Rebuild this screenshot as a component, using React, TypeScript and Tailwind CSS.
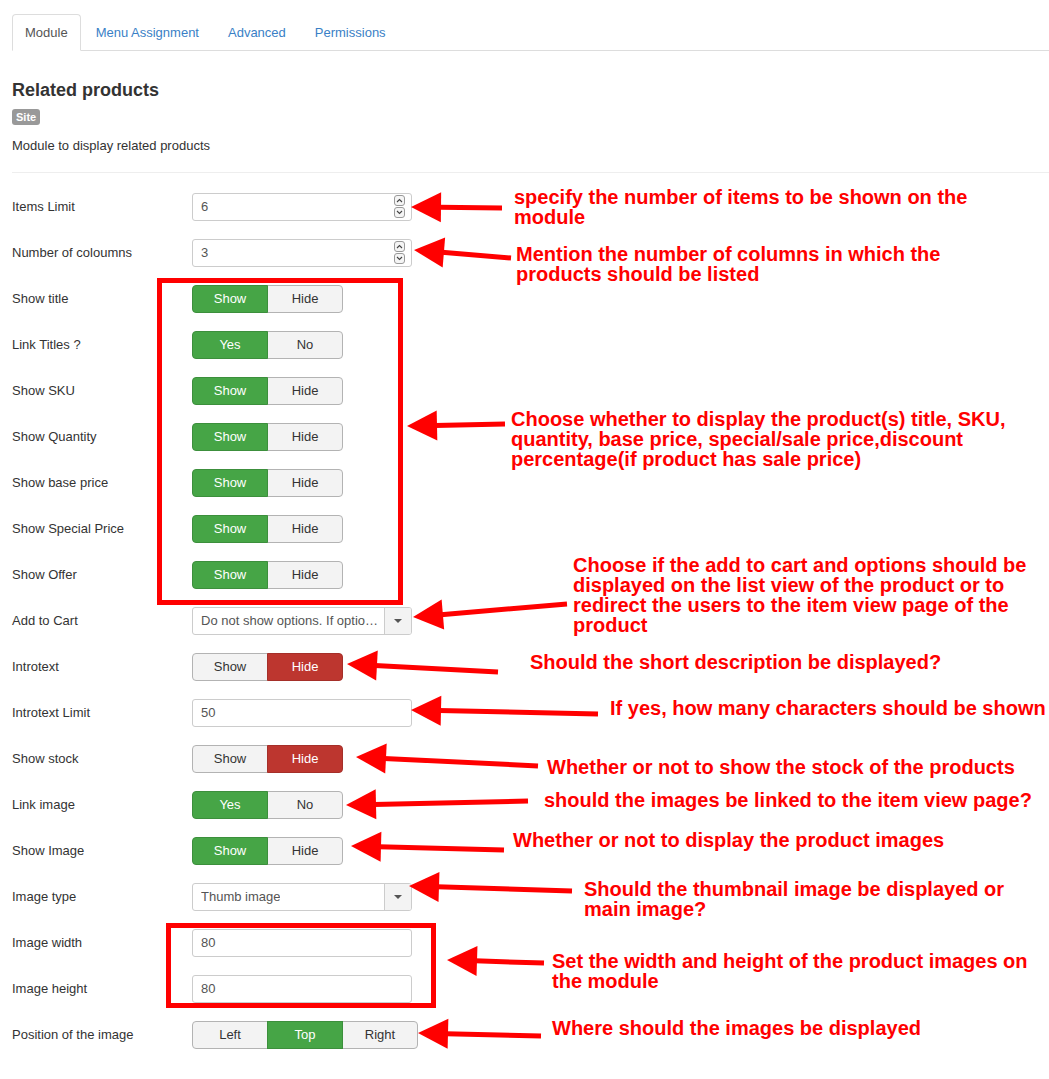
import React from "react";

type Row =
  | { label: string; kind: "number" | "text"; value: string }
  | { label: string; kind: "select"; value: string }
  | { label: string; kind: "toggle"; options: string[]; active: number; color: "green" | "red" };

const rows: Row[] = [
  { label: "Items Limit", kind: "number", value: "6" },
  { label: "Number of coloumns", kind: "number", value: "3" },
  { label: "Show title", kind: "toggle", options: ["Show", "Hide"], active: 0, color: "green" },
  { label: "Link Titles ?", kind: "toggle", options: ["Yes", "No"], active: 0, color: "green" },
  { label: "Show SKU", kind: "toggle", options: ["Show", "Hide"], active: 0, color: "green" },
  { label: "Show Quantity", kind: "toggle", options: ["Show", "Hide"], active: 0, color: "green" },
  { label: "Show base price", kind: "toggle", options: ["Show", "Hide"], active: 0, color: "green" },
  { label: "Show Special Price", kind: "toggle", options: ["Show", "Hide"], active: 0, color: "green" },
  { label: "Show Offer", kind: "toggle", options: ["Show", "Hide"], active: 0, color: "green" },
  { label: "Add to Cart", kind: "select", value: "Do not show options. If options are required, redirect to item view" },
  { label: "Introtext", kind: "toggle", options: ["Show", "Hide"], active: 1, color: "red" },
  { label: "Introtext Limit", kind: "text", value: "50" },
  { label: "Show stock", kind: "toggle", options: ["Show", "Hide"], active: 1, color: "red" },
  { label: "Link image", kind: "toggle", options: ["Yes", "No"], active: 0, color: "green" },
  { label: "Show Image", kind: "toggle", options: ["Show", "Hide"], active: 0, color: "green" },
  { label: "Image type", kind: "select", value: "Thumb image" },
  { label: "Image width", kind: "text", value: "80" },
  { label: "Image height", kind: "text", value: "80" },
  { label: "Position of the image", kind: "toggle", options: ["Left", "Top", "Right"], active: 1, color: "green" },
];

// annotation arrows: tip -> tail
const arrows: [number, number, number, number][] = [
  [411, 207, 502, 208],
  [414, 250, 511, 258],
  [407, 426, 505, 424],
  [413, 617, 567, 604],
  [347, 664, 498, 672],
  [411, 710, 598, 714],
  [356, 757, 538, 766],
  [346, 805, 528, 801],
  [351, 846, 504, 850],
  [409, 886, 572, 891],
  [447, 960, 544, 963],
  [418, 1033, 541, 1036],
];

const notes: { x: number; y: number; lines: string[] }[] = [
  { x: 514, y: 187, lines: ["specify the number of items to be shown on the", "module"] },
  { x: 516, y: 244, lines: ["Mention the number of columns in which the", "products should be listed"] },
  {
    x: 511,
    y: 409,
    lines: [
      "Choose whether to display the product(s) title, SKU,",
      "quantity, base price, special/sale price,discount",
      "percentage(if product has sale price)",
    ],
  },
  {
    x: 573,
    y: 555,
    lines: [
      "Choose if the add to cart and options should be",
      "displayed on the list view of the product or to",
      "redirect the users to the item view page of the",
      "product",
    ],
  },
  { x: 530, y: 652, lines: ["Should the short description be displayed?"] },
  { x: 610, y: 698, lines: ["If yes, how many characters should be shown"] },
  { x: 547, y: 757, lines: ["Whether or not to show the stock of the products"] },
  { x: 544, y: 790, lines: ["should the images be linked to the item view page?"] },
  { x: 513, y: 830, lines: ["Whether or not to display the product images"] },
  { x: 584, y: 879, lines: ["Should the thumbnail image be displayed or", "main image?"] },
  { x: 552, y: 951, lines: ["Set the width and height of the product images on", "the module"] },
  { x: 552, y: 1018, lines: ["Where should the images be displayed"] },
];

function Spinner() {
  return (
    <div className="flex flex-col gap-[1px]">
      {[0, 1].map((i) => (
        <div
          key={i}
          className="flex h-[11px] w-[11px] items-center justify-center rounded-[3px] border border-[#9a9a9a] bg-[#f5f5f5]"
        >
          <svg width="7" height="5" viewBox="0 0 7 5">
            <path
              d={i === 0 ? "M1 4 L3.5 1.5 L6 4" : "M1 1 L3.5 3.5 L6 1"}
              fill="none"
              stroke="#444"
              strokeWidth="1.1"
            />
          </svg>
        </div>
      ))}
    </div>
  );
}

function Control({ row }: { row: Row }) {
  if (row.kind === "number" || row.kind === "text") {
    return (
      <div className="flex h-7 w-[220px] items-center justify-between rounded-[3px] border border-[#ccc] bg-white pl-2 pr-[6px] text-[13px] text-[#555]">
        <span>{row.value}</span>
        {row.kind === "number" && <Spinner />}
      </div>
    );
  }
  if (row.kind === "select") {
    return (
      <div className="flex h-7 w-[220px] items-stretch overflow-hidden rounded-[3px] border border-[#ccc] bg-white text-[13px] text-[#555]">
        <div className="flex min-w-0 flex-1 items-center pl-2 pr-1">
          <span className="truncate">{row.value}</span>
        </div>
        <div className="flex w-[27px] items-center justify-center border-l border-[#ccc] bg-[#f3f3f3]">
          <svg width="8" height="4" viewBox="0 0 8 4">
            <path d="M0 0 L8 0 L4 4 Z" fill="#555" />
          </svg>
        </div>
      </div>
    );
  }
  return (
    <div className="flex">
      {row.options.map((opt, i) => {
        const on = i === row.active;
        const first = i === 0;
        const last = i === row.options.length - 1;
        let cls = "border-[#b3b3b3] bg-[#f3f3f3] text-[#333]";
        if (on && row.color === "green") cls = "relative border-[#3c8f3c] bg-[#46a546] text-white";
        if (on && row.color === "red") cls = "relative border-[#a52f29] bg-[#bd362f] text-white";
        return (
          <div
            key={opt}
            className={`flex h-7 w-[76px] items-center justify-center border text-[13px] ${cls} ${
              first ? "rounded-l-[4px]" : "-ml-px"
            } ${last ? "rounded-r-[4px]" : ""}`}
          >
            {opt}
          </div>
        );
      })}
    </div>
  );
}

function Arrow({ a }: { a: [number, number, number, number] }) {
  const [tx, ty, ex, ey] = a;
  const len = Math.hypot(ex - tx, ey - ty);
  const dx = (ex - tx) / len;
  const dy = (ey - ty) / len;
  const nx = -dy;
  const ny = dx;
  const hl = 30;
  const hw = 15;
  const bx = tx + dx * hl;
  const by = ty + dy * hl;
  return (
    <g>
      <line x1={bx - dx * 2} y1={by - dy * 2} x2={ex} y2={ey} stroke="#ff0000" strokeWidth="5" />
      <polygon
        points={`${tx},${ty} ${bx + nx * hw},${by + ny * hw} ${bx - nx * hw},${by - ny * hw}`}
        fill="#ff0000"
      />
    </g>
  );
}

export default function App() {
  return (
    <div className="relative h-[1079px] w-[1049px] overflow-hidden bg-white font-['Liberation_Sans',Arial,sans-serif] text-[13px] text-[#333]">
      <div className="pl-3 pt-[14px]">
        {/* tabs */}
        <div className="flex border-b border-[#ddd]">
          <div className="-mb-px rounded-t-[4px] border border-[#ddd] border-b-white bg-white px-3 pb-[7px] pt-[9px] leading-[18px] text-[#555]">
            Module
          </div>
          {["Menu Assignment", "Advanced", "Permissions"].map((t) => (
            <div
              key={t}
              className="ml-px border border-transparent px-[13px] pb-[7px] pt-[9px] leading-[18px] text-[#3a7fc6]"
            >
              {t}
            </div>
          ))}
        </div>

        {/* header */}
        <h2 className="mt-[29px] text-[18px] font-bold leading-[20px] text-[#333]">Related products</h2>
        <span className="mt-[9px] inline-block rounded-[3px] bg-[#999] px-[4px] text-[11px] font-bold leading-[16px] text-white">
          Site
        </span>
        <p className="mt-[10px] leading-[18px]">Module to display related products</p>
        <div className="mt-[17px] border-t border-[#eee]" />

        {/* form */}
        <div className="mt-[20px] flex flex-col gap-[18px]">
          {rows.map((row) => (
            <div key={row.label} className="flex items-center">
              <div className="w-[180px] leading-[18px]">{row.label}</div>
              <Control row={row} />
            </div>
          ))}
        </div>
      </div>

      {/* annotations */}
      <svg className="pointer-events-none absolute left-0 top-0" width="1049" height="1079">
        <rect x="159.5" y="280.5" width="241" height="322" fill="none" stroke="#ff0000" strokeWidth="5" />
        <rect x="168.5" y="925.5" width="265" height="80" fill="none" stroke="#ff0000" strokeWidth="5" />
        {arrows.map((a, i) => (
          <Arrow key={i} a={a} />
        ))}
      </svg>
      {notes.map((n, i) => (
        <div
          key={i}
          className="absolute whitespace-nowrap font-['Liberation_Sans',Arial,sans-serif] text-[20px] font-bold leading-[20px] text-[#ff0000]"
          style={{ left: n.x, top: n.y }}
        >
          {n.lines.map((l) => (
            <div key={l}>{l}</div>
          ))}
        </div>
      ))}
    </div>
  );
}
